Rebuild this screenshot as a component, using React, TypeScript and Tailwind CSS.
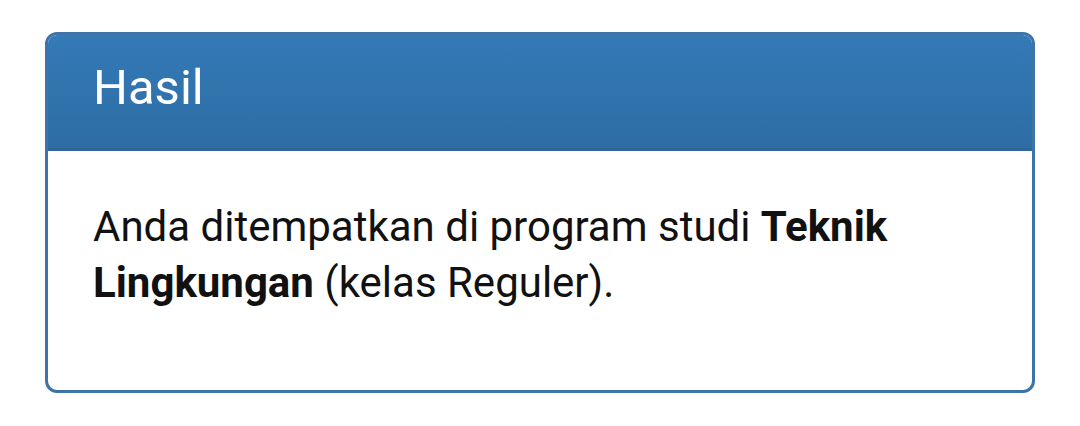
export default function App() {
  return (
    <div className="min-h-screen bg-white px-[45px] pt-[32px] font-['Roboto',sans-serif]">
      <div className="overflow-hidden rounded-[12px] border-[3px] border-[#3f74a8] bg-white">
        <div className="h-[116px] border-b-[3px] border-[#2f679b] bg-gradient-to-b from-[#337ab7] to-[#2e6da4] px-[45px] pt-[19px] text-[49px] leading-[68px] text-white">
          Hasil
        </div>
        <div className="h-[239px] px-[45px] pt-[48px] text-[42px] leading-[56px] text-[#111]">
          Anda ditempatkan di program studi <b>Teknik Lingkungan</b> (kelas Reguler).
        </div>
      </div>
    </div>
  )
}
